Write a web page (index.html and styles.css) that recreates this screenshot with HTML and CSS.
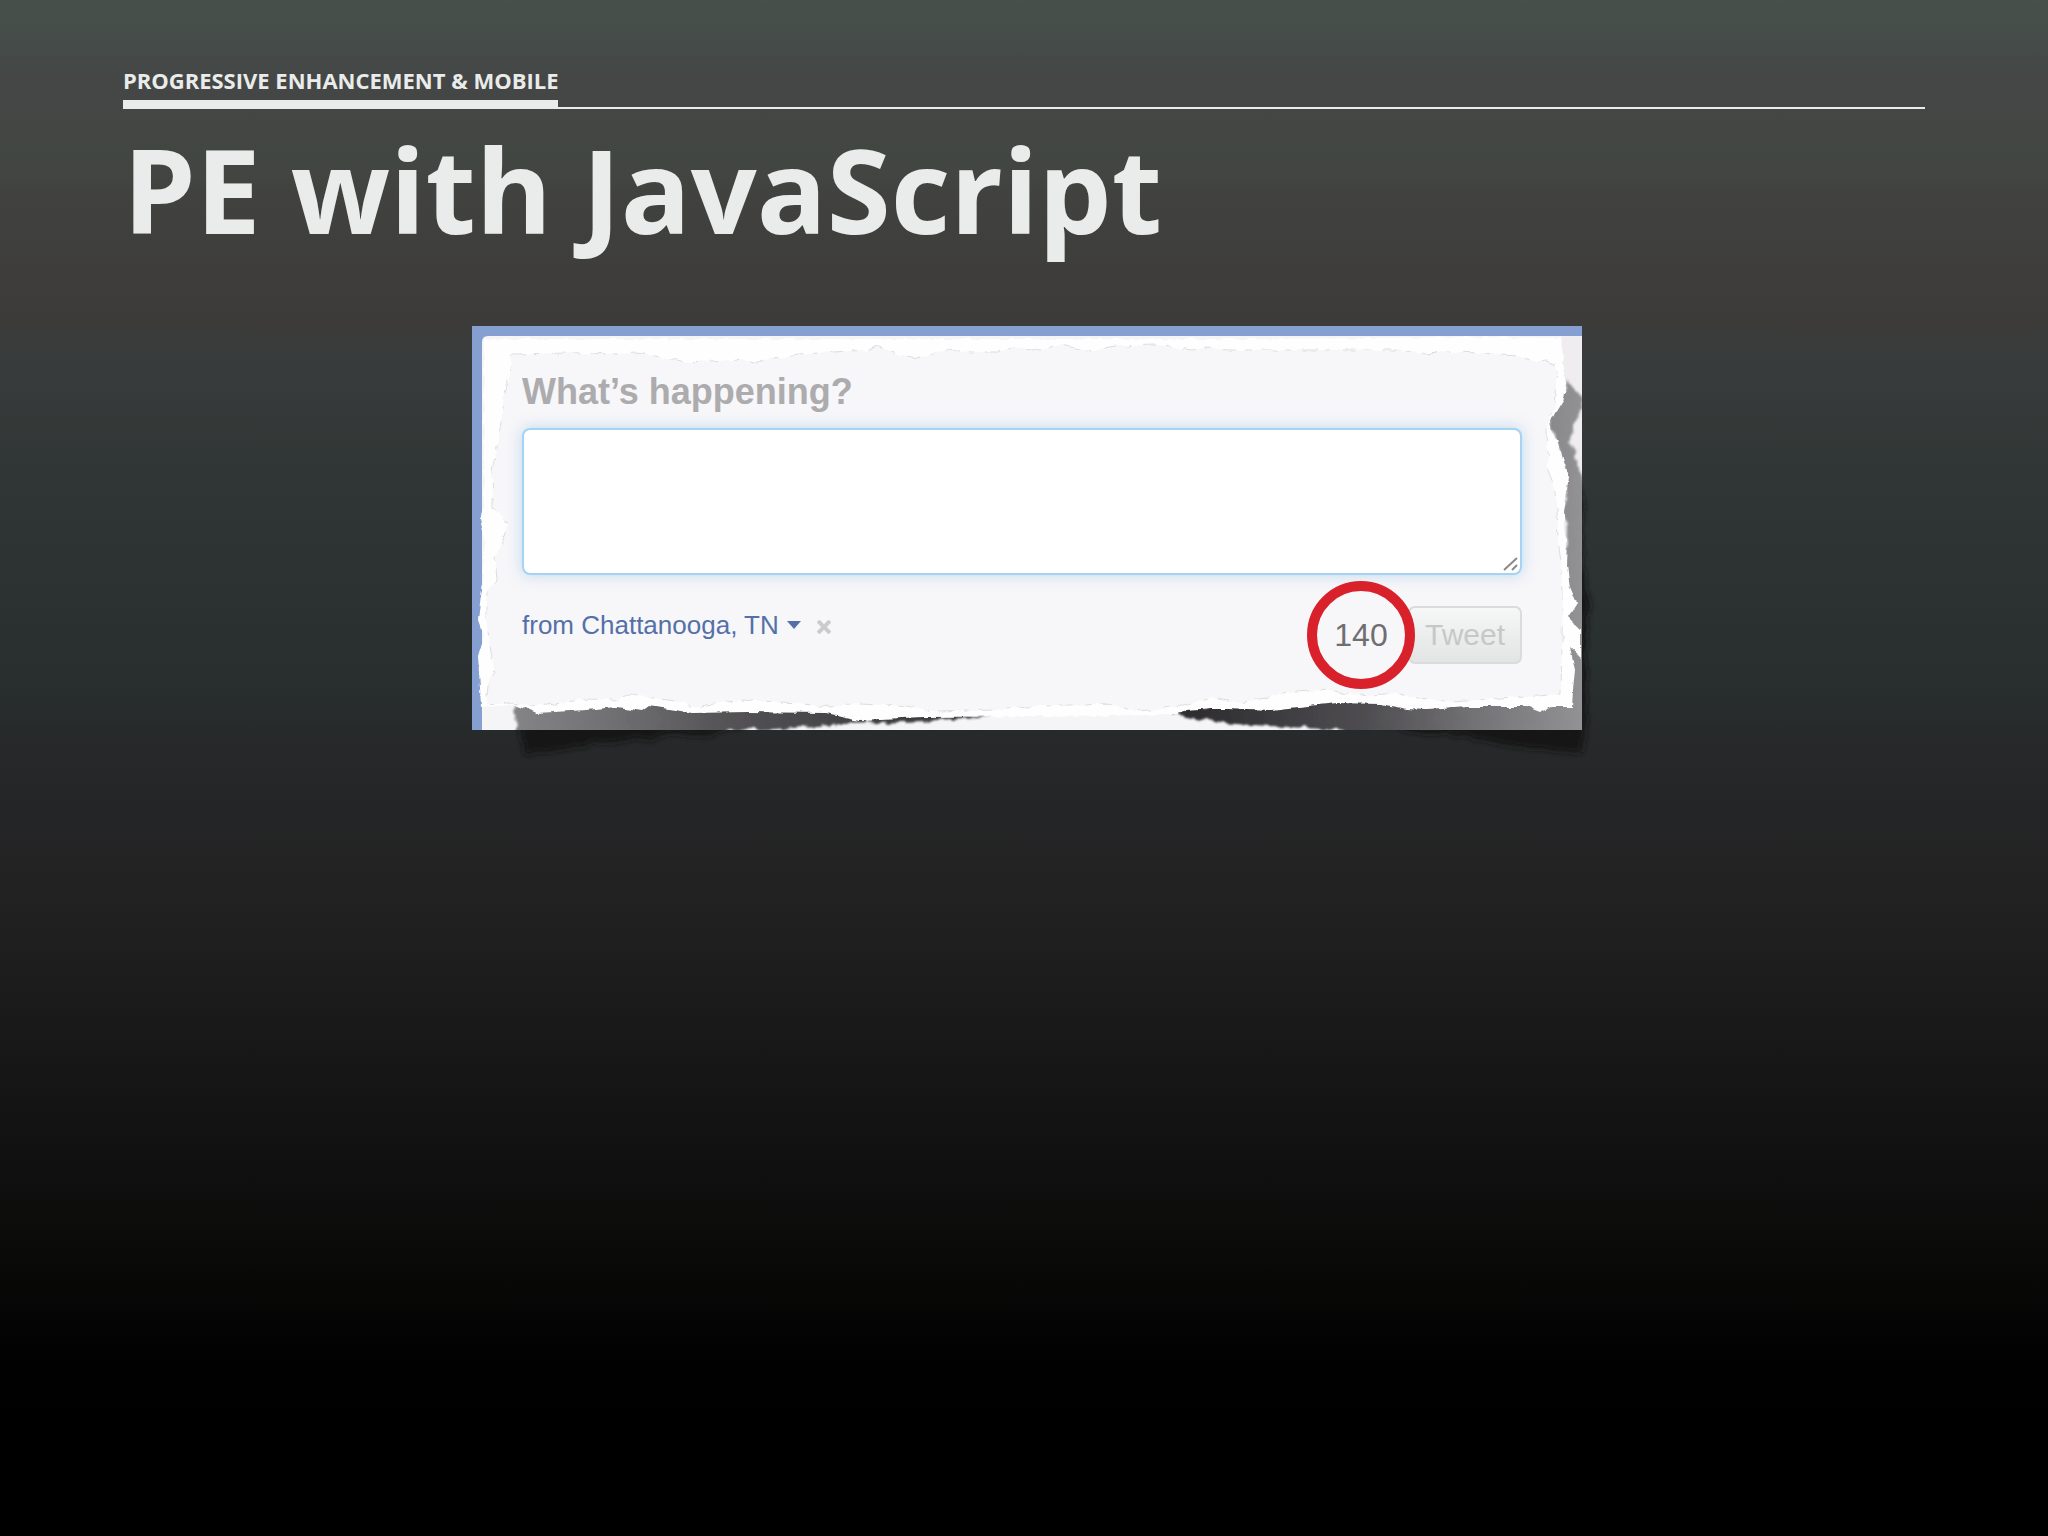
FILE: index.html
```
<!DOCTYPE html>
<html lang="en">
<head>
  <meta charset="UTF-8">
  <meta name="viewport" content="width=device-width, initial-scale=1.0">
  <title>PE with JavaScript</title>
  <link rel="stylesheet" href="styles.css">
</head>
<body>

  <header class="slide-header">
    <p class="section-name"><span>Progressive Enhancement &amp; Mobile</span></p>
    <h1>PE with JavaScript</h1>
  </header>

  <main class="slide-body">
    <form class="tweet-card">
      <!-- torn paper -->
      <svg class="paper" viewBox="0 0 1110 404" preserveAspectRatio="none" aria-hidden="true">
        <defs>
          <filter id="rough" x="-5%" y="-5%" width="110%" height="110%">
            <feTurbulence type="fractalNoise" baseFrequency="0.08" numOctaves="3" seed="4"/>
            <feDisplacementMap in="SourceGraphic" scale="6" xChannelSelector="R" yChannelSelector="G"/>
            <feGaussianBlur stdDeviation="0.6"/>
          </filter>
          <filter id="shadow-rough" x="-5%" y="-20%" width="110%" height="140%">
            <feTurbulence type="fractalNoise" baseFrequency="0.08" numOctaves="3" seed="7"/>
            <feDisplacementMap in="SourceGraphic" scale="9" xChannelSelector="R" yChannelSelector="G"/>
            <feGaussianBlur stdDeviation="1.3"/>
          </filter>
          <filter id="soft" x="-5%" y="-20%" width="110%" height="140%">
            <feTurbulence type="fractalNoise" baseFrequency="0.07" numOctaves="2" seed="9"/>
            <feDisplacementMap in="SourceGraphic" scale="10" xChannelSelector="R" yChannelSelector="G"/>
            <feGaussianBlur stdDeviation="3"/>
          </filter>
          <linearGradient id="shade" gradientUnits="userSpaceOnUse" x1="40" y1="0" x2="1110" y2="0">
            <stop offset="0" stop-color="#858487"/>
            <stop offset=".12" stop-color="#6a696c"/>
            <stop offset=".2" stop-color="#545356"/>
            <stop offset=".34" stop-color="#403f42"/>
            <stop offset=".64" stop-color="#2e2d30"/>
            <stop offset=".8" stop-color="#4f4e51"/>
            <stop offset=".9" stop-color="#737275"/>
            <stop offset="1" stop-color="#929194"/>
          </linearGradient>
          <clipPath id="frame"><path d="M0 0H1110V404H0Z"/></clipPath>
        </defs>

        <!-- shadow that falls below and beside the card -->
        <path d="M46 396 56 429 90 422 140 416 238 407 280 398H900L950 405 998 412 1031 418 1060 423 1111 426 1114 380 1113 330 1116 280 1111 240 1108 160H1100V396Z" fill="#131415" filter="url(#soft)"/>

        <g clip-path="url(#frame)">
          <path d="M0 0H1110V404H0Z" fill="#859fd0"/>
          <path d="M10 404V16Q10 10 16 10H1110V404Z" fill="#f5f5f7"/>
          <path d="M1090 10H1110V404H1090Z" fill="#efedf0"/>
          <g fill="url(#shade)" filter="url(#shadow-rough)">
            <path d="M43 376 150 376 400 384 520 390 451 395 408 397 370 398 320 402 288 404 258 404 238 414H44Z"/>
            <path d="M698 387 738 378 900 370 1090 376 1094 200 1090 130 1076 98 1096 54 1110 72 1106 92 1098 110 1104 134 1112 156 1116 170V420H915L865 404 815 401 748 397 725 393Z"/>
          </g>
          <path d="M12 13 200 13 400 13 600 13 800 13 1000 11 1090 12 1091 37 1095 57 1091 74 1083 87 1077 99 1085 114 1091 137 1096 151 1091 184 1091 201 1096 214 1095 241 1098 261 1105 277 1096 291 1109 304 1109 331 1098 321 1103 344 1101 364 1100 381 1081 381 1068 386 1055 381 995 381 955 384 935 383 908 378 865 377 798 384 755 382 738 382 715 384 698 389 451 391 388 394 355 387 275 386 221 387 178 380 171 385 145 381 115 384 65 387 43 379 9 381 8 361 6 331 12 311 6 294 8 277 12 250 12 210 8 193 12 178Z" fill="#fefefe" filter="url(#rough)"/>
          <path class="inner-edge" d="M39 28 100 27 145 28 165 27 200 33 215 36 260 34 285 36 300 32 345 27 395 24 408 21 425 28 445 32 460 28 475 24 500 26 525 26 540 22 560 24 590 19 612 24 620 26 632 22 645 20 685 19 720 24 735 22 755 24 800 24 928 24 945 27 980 26 1010 27 1030 29 1045 30 1065 36 1075 35 1083 38 1085 45 1082 80 1075 101 1076 140 1082 157 1085 184 1086 214 1090 244 1091 267 1090 314 1089 367 1041 371 981 376 948 372 928 367 898 369 848 364 815 367 768 377 741 372 711 379 685 383 655 384 645 381 625 377 608 380 568 380 521 384 468 386 428 379 388 377 348 381 328 377 268 374 221 381 211 376 158 369 145 374 115 373 68 380 38 377 15 379 18 351 23 347 20 331 15 300 15 264 25 254 23 231 31 214 36 197 21 181 20 144 26 117 31 91 31 71 38 51Z" filter="url(#rough)"/>
        </g>
      </svg>

      <label class="prompt" for="status">What’s happening?</label>
      <div class="status-box">
        <textarea id="status"></textarea>
        <svg class="grip" viewBox="0 0 16 16" aria-hidden="true">
          <path d="M1 14 14 2M9 14 14 9"/>
        </svg>
      </div>

      <div class="actions">
        <div class="place">
          <button type="button" class="place-name">from Chattanooga, TN
            <svg class="caret" viewBox="0 0 14 8" aria-hidden="true"><path d="M0 0H14L7 8Z"/></svg>
          </button>
          <button type="button" class="place-clear" aria-label="Remove location">
            <svg viewBox="0 0 14 14" aria-hidden="true"><path d="M1 1 13 13M13 1 1 13"/></svg>
          </button>
        </div>
        <div class="send">
          <output class="count" for="status">140</output>
          <button type="submit" class="tweet-button" disabled>Tweet</button>
        </div>
      </div>
    </form>
  </main>

</body>
</html>
```

FILE: styles.css
```
:root {
  --chalk: #e9ecea;
  --link: #5470a8;
}

*, *::before, *::after { box-sizing: border-box; margin: 0; padding: 0; }

body {
  min-height: 100vh;
  padding: 66px 6%;
  background: #000 linear-gradient(to bottom,
    #48504c 0, #444b48 3%, #444745 5%, #424643 11%, #41413f 13%,
    #3c3b3a 21%, #393c3c 23%, #303635 31%, #2a3030 42%, #272b2b 47%,
    #272829 49%, #212122 59%, #1b1b1c 65%, #131314 73%, #0b0b0a 81%,
    #020202 88%, #000 92%);
  background-attachment: fixed;
  color: var(--chalk);
  font-family: "Open Sans", "Noto Sans", sans-serif;
}

button, textarea { font: inherit; }

/* Header */
.section-name {
  border-bottom: 2px solid var(--chalk);
  font-size: 22px;
  font-weight: 700;
  line-height: 28px;
  text-transform: uppercase;
}

.section-name span {
  display: inline-block;
  padding-bottom: 6px;
  border-bottom: 7px solid var(--chalk);
}

h1 {
  font-size: 116px;
  font-weight: 700;
  line-height: 160px;
}

/* Tweet box */
.slide-body {
  display: flex;
  justify-content: center;
  padding: 57px 0 0 6px;
}

.tweet-card {
  position: relative;
  width: 1110px;
  max-width: 100%;
  padding: 46px 60px 66px 50px;
  font-family: "Liberation Sans", Arial, sans-serif;
}

.paper {
  position: absolute;
  inset: 0;
  width: 100%;
  height: 100%;
  overflow: visible;
}

.inner-edge {
  fill: #f7f6f9;
  stroke: #dddcdf;
  stroke-width: 1;
  stroke-dasharray: 14 9 5 12;
}

.prompt {
  display: block;
  position: relative;
  color: #acabad;
  font-size: 36px;
  font-weight: 700;
  line-height: 40px;
}

.status-box {
  position: relative;
  margin-top: 16px;
}

textarea {
  display: block;
  width: 100%;
  height: 147px;
  padding: 12px;
  border: 2px solid #a5d3f3;
  border-radius: 8px;
  background: #fff;
  box-shadow: 0 0 14px rgba(130, 190, 225, 0.5);
  font-size: 26px;
  outline: none;
  resize: none;
}

.grip {
  position: absolute;
  right: 3px;
  bottom: 3px;
  width: 16px;
  height: 16px;
  fill: none;
  stroke: #8a8a8a;
  stroke-width: 2;
}

.actions {
  display: flex;
  justify-content: space-between;
  position: relative;
  margin-top: 31px;
}

.place {
  display: flex;
  align-items: center;
  gap: 16px;
  height: 38px;
}

.place button {
  display: flex;
  align-items: center;
  gap: 8px;
  border: none;
  background: none;
}

.place-name {
  color: var(--link);
  font-size: 26px;
}

.caret {
  width: 14px;
  height: 8px;
  fill: var(--link);
}

.place-clear {
  padding-top: 4px;
}

.place-clear svg {
  width: 14px;
  height: 14px;
  fill: none;
  stroke: #cbcacd;
  stroke-width: 4;
}

.send {
  display: flex;
  align-items: center;
}

/* red ring marks the counter */
.count {
  position: relative;
  z-index: 1;
  display: flex;
  align-items: center;
  justify-content: center;
  width: 108px;
  height: 108px;
  margin: -26px -7px -26px 0;
  border: 10px solid #d8212b;
  border-radius: 50%;
  background: #f7f7f9;
  color: #6f6e70;
  font-size: 32px;
}

.tweet-button {
  width: 114px;
  height: 58px;
  border: 2px solid #d9dcda;
  border-radius: 7px;
  background: linear-gradient(#f6f7f7, #e2e5e3);
  color: #c6c8c7;
  font-size: 30px;
}
```
